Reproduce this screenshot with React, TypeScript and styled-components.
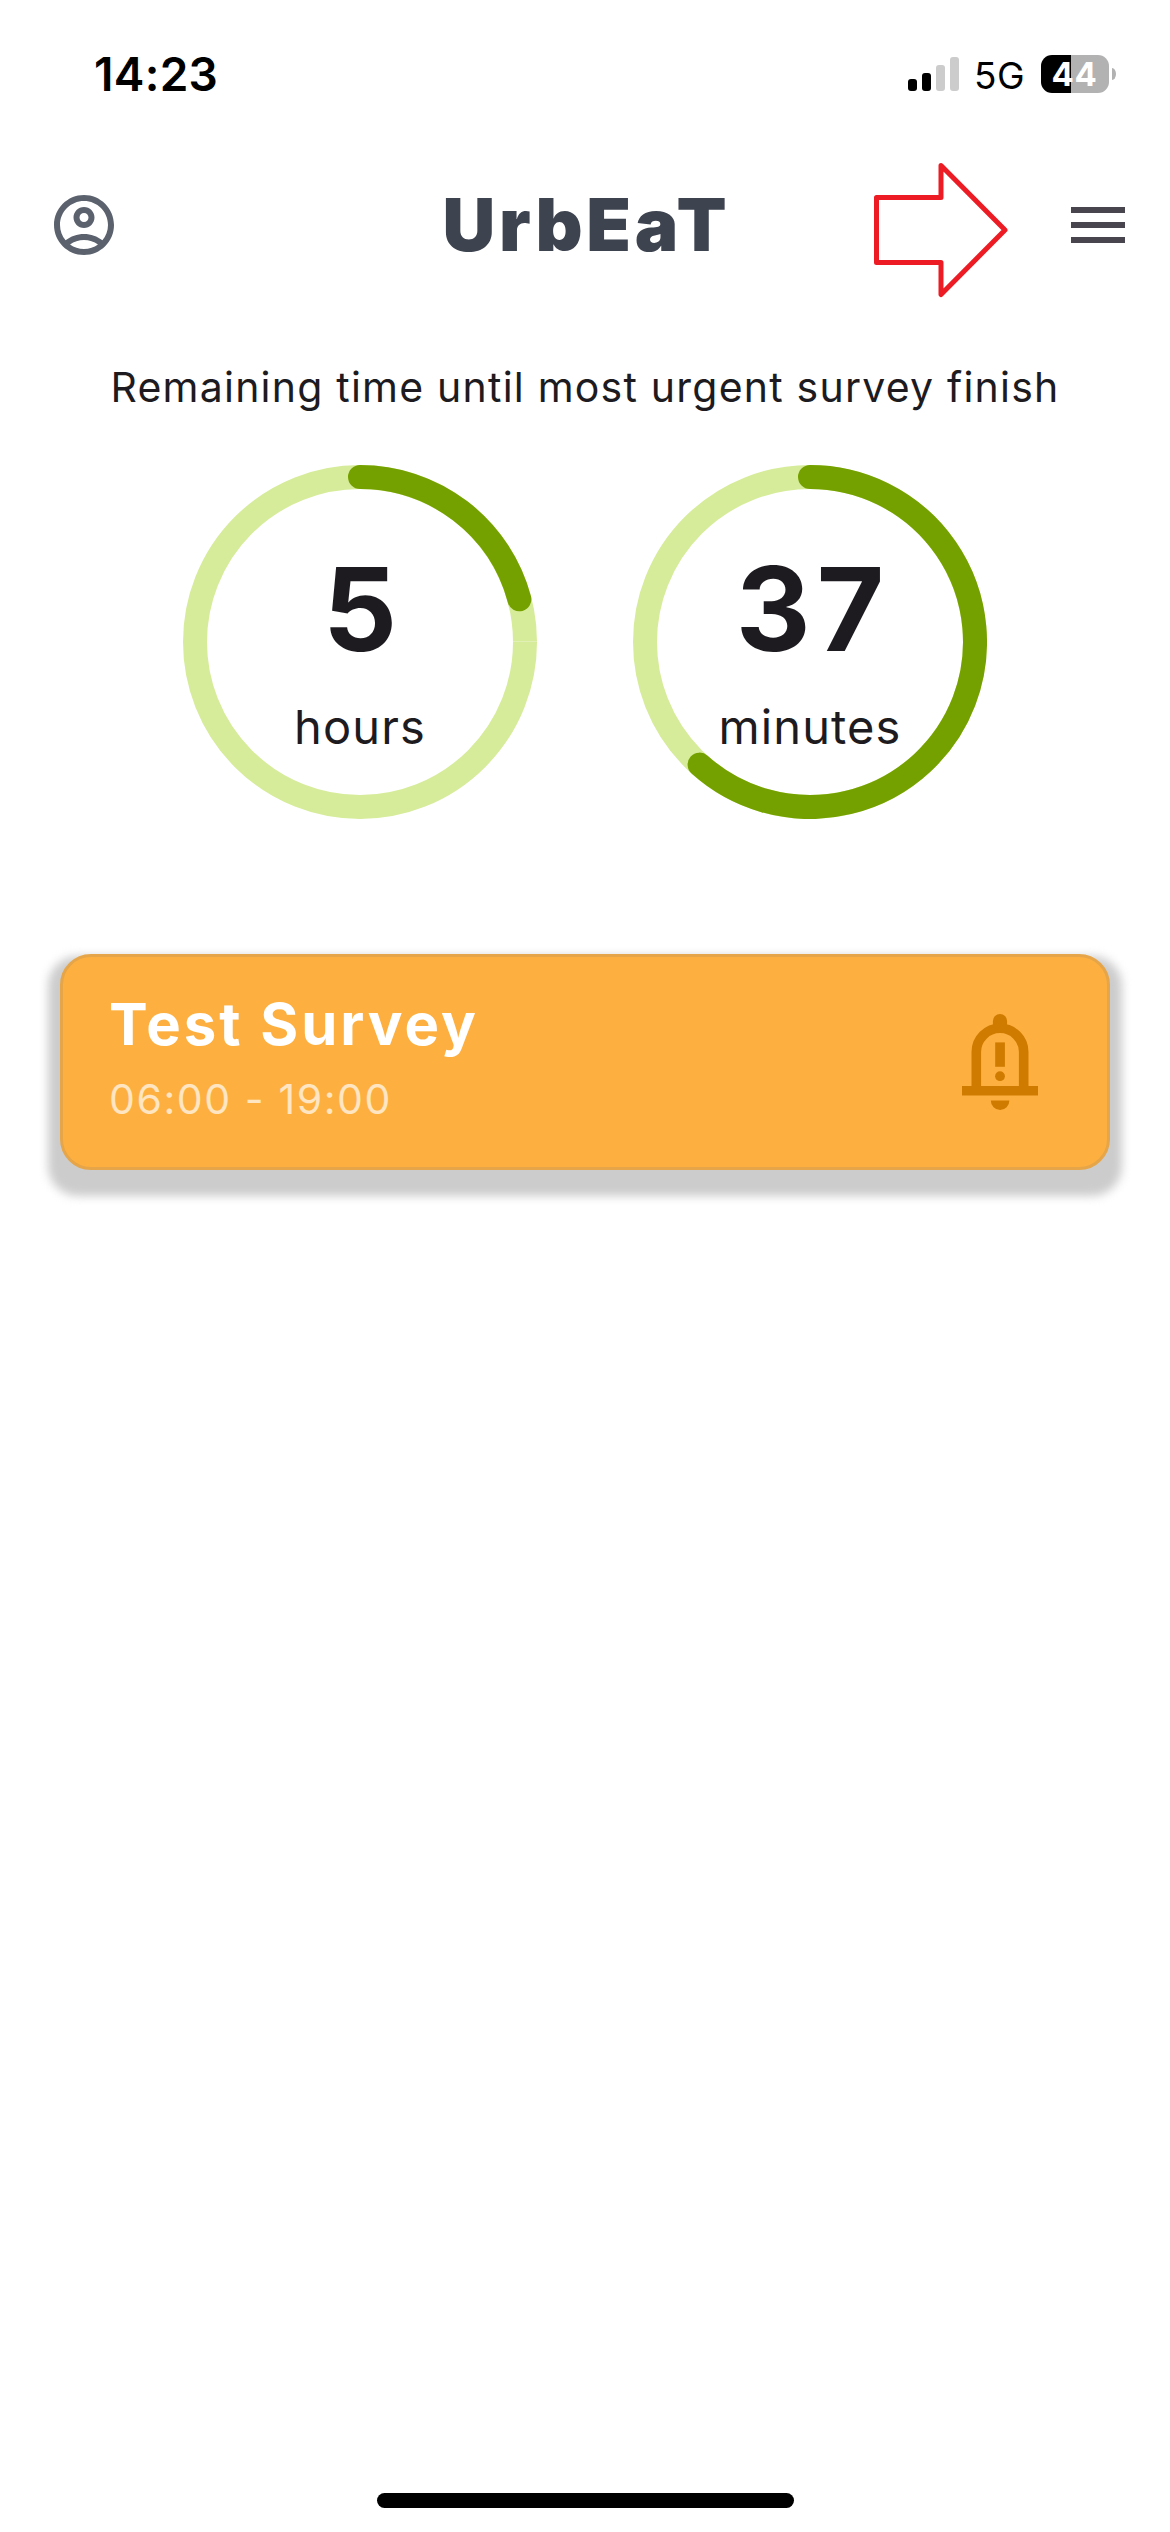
import React from "react";
import styled, { createGlobalStyle } from "styled-components";

const GlobalStyle = createGlobalStyle`
  * { box-sizing: border-box; }
  body {
    margin: 0;
    background: #fff;
    font-family: Inter, "Liberation Sans", sans-serif;
    color: #1d1b20;
  }
`;

const Screen = styled.div`
  display: flex;
  flex-direction: column;
  width: 1170px;
  height: 2532px;
  background: #fff;
  white-space: nowrap;
`;

const StatusBar = styled.div`
  display: flex;
  align-items: center;
  justify-content: space-between;
  height: 148px;
  padding: 0 54px 0 94px;
  color: #000;
`;

const Clock = styled.time`
  font-size: 46px;
  font-weight: 600;
  line-height: 56px;
  letter-spacing: 0.3px;
`;

const StatusIcons = styled.div`
  display: flex;
  align-items: center;
`;

const SignalBars = styled.div`
  display: flex;
  align-items: flex-end;
  gap: 5px;
  height: 34px;
`;

const SignalBar = styled.span<{ $height: number; $active: boolean }>`
  width: 9px;
  height: ${(p) => p.$height}px;
  border-radius: 3px;
  background: ${(p) => (p.$active ? "#000" : "#ccc")};
`;

const Network = styled.span`
  width: 67px;
  margin-left: 15px;
  padding-top: 4px;
  font-size: 37px;
  line-height: 44px;
  letter-spacing: 0.5px;
`;

const Battery = styled.div`
  display: flex;
  align-items: center;
  justify-content: center;
  width: 68px;
  height: 38px;
  padding-right: 1px;
  border-radius: 11px;
  background: linear-gradient(to right, #000 30px, #b2b2b2 30px);
  color: #fff;
  font-size: 33px;
  font-weight: 700;
  line-height: 38px;
  letter-spacing: 0.6px;
`;

const BatteryTip = styled.span`
  width: 4px;
  height: 12px;
  margin-left: 3px;
  border-radius: 0 4px 4px 0 / 0 6px 6px 0;
  background: #b2b2b2;
`;

const Header = styled.header`
  position: relative;
  display: grid;
  grid-template-columns: 1fr auto 1fr;
  align-items: center;
  height: 154px;
  padding: 0 45px 0 48px;
`;

const IconButton = styled.button<{ $align: "start" | "end" }>`
  display: flex;
  justify-self: ${(p) => p.$align};
  padding: 0;
  border: 0;
  background: none;
`;

const Brand = styled.h1`
  margin: 0;
  font-size: 73px;
  font-weight: 900;
  line-height: 90px;
  letter-spacing: 3.7px;
  color: #3d434f;
`;

const Pointer = styled.svg`
  position: absolute;
  left: 872px;
  top: 13px;
`;

const Caption = styled.p`
  margin: 60px 0 53px;
  font-size: 41px;
  line-height: 50px;
  letter-spacing: 1.22px;
  text-align: center;
`;

const Timers = styled.section`
  display: flex;
  justify-content: center;
  gap: 96px;
`;

const Dial = styled.div`
  display: grid;
  width: 354px;
  height: 354px;

  > * {
    grid-area: 1 / 1;
  }
`;

const Reading = styled.div`
  display: flex;
  flex-direction: column;
  align-items: center;
  padding-top: 74px;
`;

const Amount = styled.strong`
  padding-left: 6px;
  font-size: 116px;
  font-weight: 700;
  line-height: 140px;
  letter-spacing: 6px;
`;

const Unit = styled.span`
  margin-top: 20px;
  font-size: 47px;
  line-height: 56px;
  letter-spacing: 1.1px;
`;

const CardShadow = styled.div`
  position: relative;
  isolation: isolate;
  margin: 135px 60px 0;

  &::before {
    content: "";
    position: absolute;
    z-index: -1;
    inset: 2px -12px -26px;
    border-radius: 30px;
    background: #ccc;
    filter: blur(5px);
  }
`;

const SurveyCard = styled.article`
  display: flex;
  align-items: center;
  justify-content: space-between;
  height: 216px;
  padding: 0 59px 0 46px;
  border: 3px solid #e5a548;
  border-radius: 31px;
  background: #fdb040;
`;

const SurveyText = styled.div`
  align-self: flex-start;
  padding-top: 32px;
`;

const SurveyTitle = styled.h2`
  margin: 0;
  font-size: 58px;
  font-weight: 700;
  line-height: 70px;
  letter-spacing: 3px;
  color: #fff;
`;

const SurveyHours = styled.p`
  margin: 15px 0 0;
  font-size: 41px;
  font-weight: 400;
  line-height: 50px;
  letter-spacing: 1.58px;
  color: #ffe5c1;
`;

const HomeIndicator = styled.div`
  width: 417px;
  height: 15px;
  margin: auto auto 24px 377px;
  border-radius: 8px;
  background: #000;
`;

const SIGNAL = [
  { height: 12, active: true },
  { height: 18, active: true },
  { height: 26, active: false },
  { height: 34, active: false },
];

const AccountIcon = () => (
  <svg width="72" height="72" viewBox="0 0 24 24" fill="#5b626e">
    <path
      fillRule="evenodd"
      d="M12 2C6.48 2 2 6.48 2 12s4.48 10 10 10 10-4.48 10-10S17.52 2 12 2zM7.35 18.5C8.66 17.56 10.26 17 12 17s3.34.56 4.65 1.5C15.34 19.44 13.74 20 12 20s-3.34-.56-4.65-1.5zm10.79-1.38C16.45 15.8 14.32 15 12 15s-4.45.8-6.14 2.12C4.7 15.73 4 13.95 4 12c0-4.42 3.58-8 8-8s8 3.58 8 8c0 1.95-.7 3.73-1.86 5.12z"
    />
    <path
      fillRule="evenodd"
      d="M12 6c-1.93 0-3.5 1.57-3.5 3.5S10.07 13 12 13s3.5-1.57 3.5-3.5S13.93 6 12 6zm0 5c-.83 0-1.5-.67-1.5-1.5S11.17 8 12 8s1.5.67 1.5 1.5S12.83 11 12 11z"
    />
  </svg>
);

const MenuIcon = () => (
  <svg width="54" height="36" viewBox="0 0 54 36" fill="#49454f">
    <path d="M0 0h54v6H0zM0 15h54v6H0zM0 30h54v6H0z" />
  </svg>
);

const BellAlertIcon = () => (
  <svg width="96" height="96" viewBox="0 0 96 96">
    <g fill="#cf7b00">
      <path d="M40.9 17V7.1a7.1 7.1 0 0 1 14.2 0V17z" />
      <path d="M10 72.1h76v9.4H10z" />
      <path d="M38.8 86.6h18.6a9.3 9.3 0 0 1-18.6 0z" />
      <path d="M43.2 28.4h9.7v24.4h-9.7z" />
      <circle cx="48" cy="62.2" r="4.9" />
    </g>
    <path
      d="M24.3 74V38a23.7 23.7 0 0 1 47.4 0v36"
      fill="none"
      stroke="#cf7b00"
      strokeWidth="9.6"
    />
  </svg>
);

function Ring({ fraction }: { fraction: number }) {
  const angle = fraction * 2 * Math.PI;
  const x = 177 + 165 * Math.sin(angle);
  const y = 177 - 165 * Math.cos(angle);
  return (
    <svg width="354" height="354" viewBox="0 0 354 354" fill="none" strokeWidth="24">
      <circle cx="177" cy="177" r="165" stroke="#d6ec9a" />
      <path d="M330 176.5h24" stroke="#e1f1b5" strokeWidth="1" />
      <path
        d={`M177 12A165 165 0 ${fraction > 0.5 ? 1 : 0} 1 ${x} ${y}`}
        stroke="#75a100"
        strokeLinecap="round"
      />
    </svg>
  );
}

function Timer({ value, of, unit }: { value: number; of: number; unit: string }) {
  return (
    <Dial>
      <Ring fraction={value / of} />
      <Reading>
        <Amount>{value}</Amount>
        <Unit>{unit}</Unit>
      </Reading>
    </Dial>
  );
}

export default function App() {
  return (
    <Screen>
      <GlobalStyle />
      <StatusBar>
        <Clock>14:23</Clock>
        <StatusIcons>
          <SignalBars>
            {SIGNAL.map((bar) => (
              <SignalBar key={bar.height} $height={bar.height} $active={bar.active} />
            ))}
          </SignalBars>
          <Network>5G</Network>
          <Battery>44</Battery>
          <BatteryTip />
        </StatusIcons>
      </StatusBar>
      <Header>
        <IconButton $align="start" aria-label="Account">
          <AccountIcon />
        </IconButton>
        <Brand>UrbEaT</Brand>
        <IconButton $align="end" aria-label="Menu">
          <MenuIcon />
        </IconButton>
        <Pointer width="140" height="140" viewBox="0 0 140 140" fill="none">
          <path
            d="M4.5 36.5H69V4.5L133 69L69 133.5V101.500H4.5z"
            stroke="#ed1c24"
            strokeWidth="5"
            strokeLinejoin="round"
          />
        </Pointer>
      </Header>
      <Caption>Remaining time until most urgent survey finish</Caption>
      <Timers>
        <Timer value={5} of={24} unit="hours" />
        <Timer value={37} of={60} unit="minutes" />
      </Timers>
      <CardShadow>
        <SurveyCard>
          <SurveyText>
            <SurveyTitle>Test Survey</SurveyTitle>
            <SurveyHours>06:00 - 19:00</SurveyHours>
          </SurveyText>
          <BellAlertIcon />
        </SurveyCard>
      </CardShadow>
      <HomeIndicator />
    </Screen>
  );
}
